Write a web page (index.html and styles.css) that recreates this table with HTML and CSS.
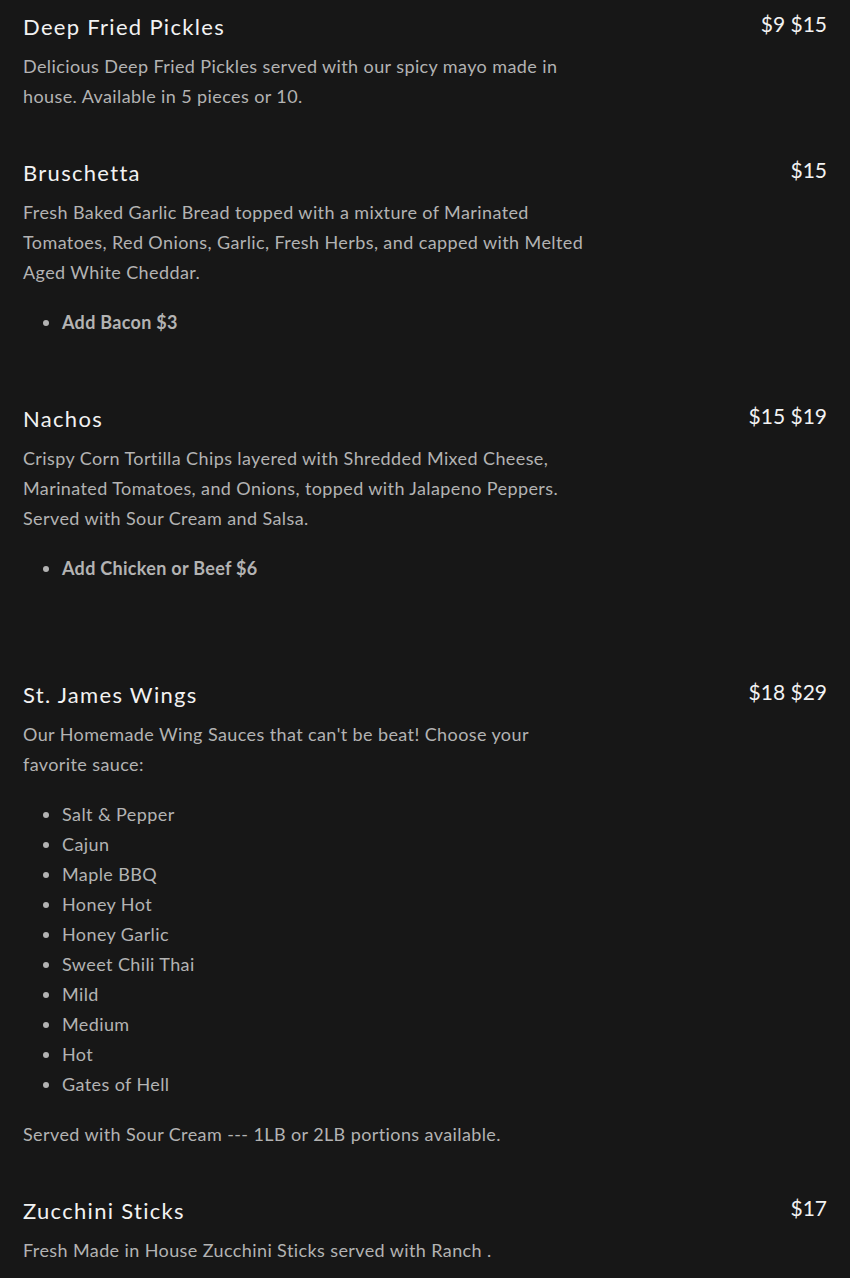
FILE: index.html
```html
<!DOCTYPE html>
<html lang="en">
<head>
<meta charset="utf-8">
<title>Menu</title>
<link rel="stylesheet" href="styles.css">
</head>
<body>
<main class="menu">
  <section class="item">
    <div class="item-head">
      <h3 class="item-title">Deep Fried Pickles</h3>
      <div class="item-price">$9 $15</div>
    </div>
    <div class="item-desc">
      <p>Delicious Deep Fried Pickles served with our spicy mayo made in house. Available in 5 pieces or 10.</p>
    </div>
  </section>

  <section class="item">
    <div class="item-head">
      <h3 class="item-title">Bruschetta</h3>
      <div class="item-price">$15</div>
    </div>
    <div class="item-desc">
      <p>Fresh Baked Garlic Bread topped with a mixture of Marinated Tomatoes, Red Onions, Garlic, Fresh Herbs, and capped with Melted Aged White Cheddar.</p>
      <ul class="bold-list">
        <li>Add Bacon $3</li>
      </ul>
    </div>
  </section>

  <section class="item">
    <div class="item-head">
      <h3 class="item-title">Nachos</h3>
      <div class="item-price">$15 $19</div>
    </div>
    <div class="item-desc">
      <p>Crispy Corn Tortilla Chips layered with Shredded Mixed Cheese, Marinated Tomatoes, and Onions, topped with Jalapeno Peppers. Served with Sour Cream and Salsa.</p>
      <ul class="bold-list">
        <li>Add Chicken or Beef $6</li>
      </ul>
      <p class="spacer"></p>
    </div>
  </section>

  <section class="item">
    <div class="item-head">
      <h3 class="item-title">St. James Wings</h3>
      <div class="item-price">$18 $29</div>
    </div>
    <div class="item-desc">
      <p>Our Homemade Wing Sauces that can't be beat! Choose your favorite sauce:</p>
      <ul>
        <li>Salt &amp; Pepper</li>
        <li>Cajun</li>
        <li>Maple BBQ</li>
        <li>Honey Hot</li>
        <li>Honey Garlic</li>
        <li>Sweet Chili Thai</li>
        <li>Mild</li>
        <li>Medium</li>
        <li>Hot</li>
        <li>Gates of Hell</li>
      </ul>
      <p>Served with Sour Cream --- 1LB or 2LB portions available.</p>
    </div>
  </section>

  <section class="item">
    <div class="item-head">
      <h3 class="item-title">Zucchini Sticks</h3>
      <div class="item-price">$17</div>
    </div>
    <div class="item-desc">
      <p>Fresh Made in House Zucchini Sticks served with Ranch .</p>
    </div>
  </section>
</main>
</body>
</html>
```

FILE: styles.css
```css
html, body {
  margin: 0;
  padding: 0;
  background: #171717;
}

body {
  font-family: Lato, "Noto Sans", sans-serif;
  color: #b3b3b3;
}

.menu {
  padding: 12px 23px 0 23px;
}

.item {
  padding-bottom: 47px;
}

.item-head {
  display: flex;
  justify-content: space-between;
  align-items: flex-start;
  margin-bottom: 9px;
}

.item-title {
  margin: 0;
  font-size: 22px;
  font-weight: 400;
  line-height: 30px;
  letter-spacing: 1.3px;
  color: #f2f2f2;
}

.item-price {
  font-size: 21px;
  line-height: 24px;
  color: #f2f2f2;
  white-space: nowrap;
}

.item-desc {
  max-width: 566px;
  font-size: 18px;
  line-height: 30px;
  letter-spacing: 0.4px;
}

.item-desc p {
  margin: 0;
}

.item-desc ul {
  margin: 20px 0;
  padding-left: 39px;
}

.item-desc .bold-list {
  font-weight: 700;
  letter-spacing: 0.3px;
}

.item-desc .spacer {
  height: 30px;
}
```
